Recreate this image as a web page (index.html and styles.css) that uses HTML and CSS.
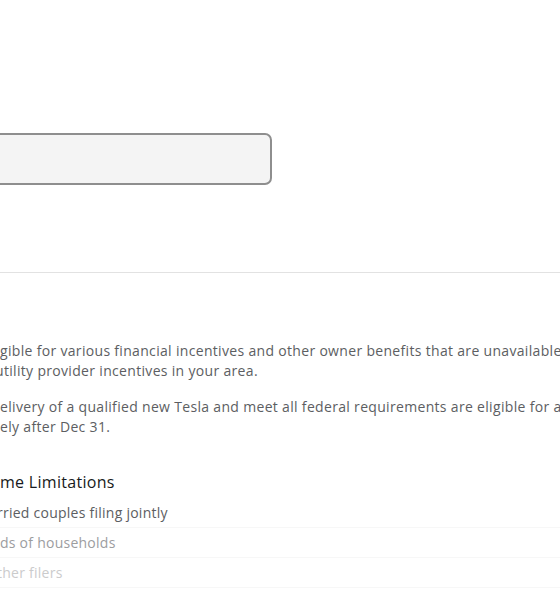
FILE: index.html
```html
<!DOCTYPE html>
<html lang="en">
<head>
<meta charset="utf-8">
<title>Incentives</title>
<link rel="stylesheet" href="styles.css">
</head>
<body>
<main class="page">
  <section class="top">
    <div class="field"></div>
  </section>
  <hr class="divider">
  <section class="content">
    <p class="para">
      <span class="line">gible for various financial incentives and other owner benefits that are unavailable</span>
      <span class="line cut-u">utility provider incentives in your area.</span>
    </p>
    <p class="para">
      <span class="line">elivery of a qualified new Tesla and meet all federal requirements are eligible for a</span>
      <span class="line">ely after Dec 31.</span>
    </p>
    <h3 class="heading">me Limitations</h3>
    <ul class="limits">
      <li class="limit limit-1 cut-r">rried couples filing jointly</li>
      <li class="limit limit-2">ds of households</li>
      <li class="limit limit-3 cut-t">ther filers</li>
    </ul>
  </section>
</main>
</body>
</html>
```

FILE: styles.css
```css
html, body {
  margin: 0;
  padding: 0;
  background: #ffffff;
  overflow: hidden;
}

.page {
  width: 560px;
  font-family: "Open Sans", "Liberation Sans", sans-serif;
  color: #5c5e62;
}

.top {
  padding-top: 133px;
  padding-bottom: 87px;
}

.field {
  margin-left: -40px;
  width: 312px;
  height: 52px;
  box-sizing: border-box;
  border: 2px solid #8e8e8e;
  border-radius: 7px;
  background: #f4f4f4;
}

.divider {
  margin: 0;
  border: 0;
  height: 1px;
  background: #e2e2e2;
}

.content {
  padding-top: 68px;
}

.para {
  margin: 0 0 16px 0;
  font-size: 14px;
  line-height: 20px;
  letter-spacing: 0.32px;
}

.line {
  display: block;
  white-space: nowrap;
}

.cut-u { text-indent: -5px; }
.cut-r { text-indent: -3px; }
.cut-t { text-indent: -3px; }

.heading {
  margin: 34px 0 5px 0;
  font-size: 16px;
  line-height: 22px;
  font-weight: 500;
  letter-spacing: 0.3px;
  color: #171a20;
  white-space: nowrap;
}

.limits {
  list-style: none;
  margin: 0;
  padding: 0;
}

.limit {
  height: 30px;
  line-height: 30px;
  font-size: 14px;
  letter-spacing: 0.25px;
  white-space: nowrap;
  border-bottom: 1px solid #f7f7f7;
  box-sizing: border-box;
}

.limit-1 { color: #5c5e62; }
.limit-2 { color: #9c9d9f; }
.limit-3 { color: #cbcbcc; }
```
